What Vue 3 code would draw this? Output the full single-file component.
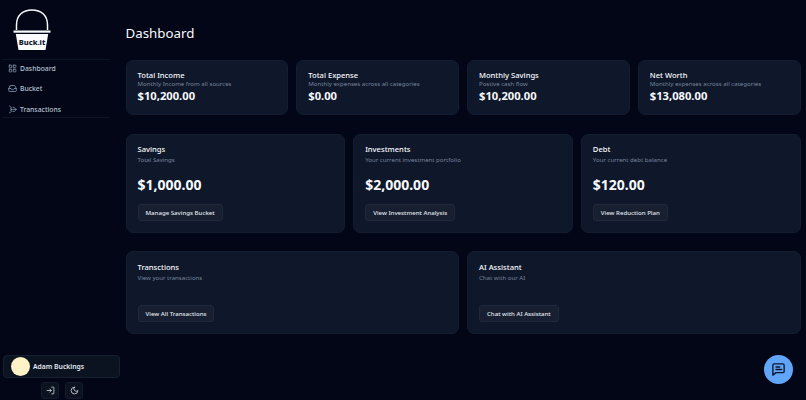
<script setup>
const stats = [
  { t: 'Total Income', s: 'Monthly Income from all sources', v: '$10,200.00' },
  { t: 'Total Expense', s: 'Monthly expenses across all categories', v: '$0.00' },
  { t: 'Monthly Savings', s: 'Postive cash flow', v: '$10,200.00' },
  { t: 'Net Worth', s: 'Monthly expenses across all categories', v: '$13,080.00' },
]
const mids = [
  { t: 'Savings', s: 'Total Savings', v: '$1,000.00', b: 'Manage Savings Bucket' },
  { t: 'Investments', s: 'Your current investment portfolio', v: '$2,000.00', b: 'View Investment Analysis' },
  { t: 'Debt', s: 'Your current debt balance', v: '$120.00', b: 'View Reduction Plan' },
]
const lows = [
  { t: 'Transctions', s: 'View your transactions', b: 'View All Transactions' },
  { t: 'AI Assistant', s: 'Chat with our AI', b: 'Chat with AI Assistant' },
]
</script>

<template>
  <div class="app">
    <aside class="side">
      <div class="logo">
        <svg width="38" height="42" viewBox="0 0 38 42">
          <path d="M3.500 21 V16 C3.500 6 10 1 19 1 S34.500 6 34.500 16 V21" fill="none" stroke="#f8fafc" stroke-width="1.500" />
          <rect x="0.500" y="21.500" width="37" height="2.200" fill="#f8fafc" />
          <path d="M2.800 25 H35.200 L32.500 41 H5.500 Z" fill="#f8fafc" />
        </svg>
        <span class="logo-text">Buck.it</span>
      </div>
      <nav class="nav">
        <a class="nav-item">
          <svg class="ic" viewBox="0 0 24 24"><rect x="3" y="3" width="7" height="7" rx="1.500" /><rect x="14" y="3" width="7" height="7" rx="1.500" /><rect x="3" y="14" width="7" height="7" rx="1.500" /><rect x="14" y="14" width="7" height="7" rx="1.500" /></svg>
          Dashboard
        </a>
        <a class="nav-item">
          <svg class="ic" viewBox="0 0 24 24"><path d="M22 12h-6l-2 3h-4l-2-3H2" /><path d="M5.500 5.100 2 12v6a2 2 0 0 0 2 2h16a2 2 0 0 0 2-2v-6l-3.500-6.900A2 2 0 0 0 16.700 4H7.300a2 2 0 0 0-1.800 1.100z" /></svg>
          Bucket
        </a>
        <a class="nav-item">
          <svg class="ic" viewBox="0 0 24 24"><path d="M4 3l5 3.500L7 11l5 1-5 1 2 4.500L4 21" /><path d="M13 7h4" /><path d="M13 17h4" /><path d="M15 12h7M19 9l3 3-3 3" /></svg>
          Transactions
        </a>
      </nav>
      <div class="side-foot">
        <div class="user">
          <span class="avatar"></span>
          <span class="uname">Adam Buckings</span>
        </div>
        <div class="actions">
          <button class="icon-btn">
            <svg class="ic" viewBox="0 0 24 24"><path d="M10 8l4 4-4 4" /><path d="M3 12h11" /><path d="M15 3h4a2 2 0 0 1 2 2v14a2 2 0 0 1-2 2h-4" /></svg>
          </button>
          <button class="icon-btn">
            <svg class="ic" viewBox="0 0 24 24"><path d="M12 3a6 6 0 0 0 9 9 9 9 0 1 1-9-9z" /></svg>
          </button>
        </div>
      </div>
    </aside>

    <main class="main">
      <h1 class="title">Dashboard</h1>
      <section class="row row4">
        <div v-for="c in stats" :key="c.t" class="card stat">
          <div class="ct">{{ c.t }}</div>
          <div class="cs">{{ c.s }}</div>
          <div class="sv">{{ c.v }}</div>
        </div>
      </section>
      <section class="row row3">
        <div v-for="c in mids" :key="c.t" class="card mid">
          <div class="ct">{{ c.t }}</div>
          <div class="cs gap">{{ c.s }}</div>
          <div class="mv">{{ c.v }}</div>
          <button class="btn">{{ c.b }}</button>
        </div>
      </section>
      <section class="row row2">
        <div v-for="c in lows" :key="c.t" class="card low">
          <div class="ct">{{ c.t }}</div>
          <div class="cs gap">{{ c.s }}</div>
          <button class="btn">{{ c.b }}</button>
        </div>
      </section>
    </main>

    <button class="fab" aria-label="Chat">
      <svg width="15" height="15" viewBox="0 0 24 24" fill="none" stroke="#0f172a" stroke-width="2.200" stroke-linecap="round" stroke-linejoin="round"><path d="M21 15a2 2 0 0 1-2 2H8l-5 4V5a2 2 0 0 1 2-2h14a2 2 0 0 1 2 2z" /><path d="M8 8h6M8 12h9" /></svg>
    </button>
  </div>
</template>

<style>
html, body { margin: 0; background: #020617; }
</style>

<style scoped>
.app {
  position: relative;
  display: flex;
  width: 806px;
  height: 400px;
  overflow: hidden;
  background: #020617;
  color: #f8fafc;
  font-family: "Noto Sans", "Open Sans", sans-serif;
}
.side {
  display: flex;
  flex-direction: column;
  width: 120px;
  flex: none;
}
.logo {
  position: relative;
  width: 38px;
  margin-left: 13px;
  padding-top: 9px;
  height: 51px;
  box-sizing: border-box;
}
.logo svg { display: block; }
.logo-text {
  position: absolute;
  left: 0;
  right: 0;
  top: 37px;
  text-align: center;
  font-size: 7.500px;
  font-weight: 800;
  line-height: 11px;
  color: #0f172a;
}
.nav {
  display: flex;
  flex-direction: column;
  margin: 8px 10px 0 2px;
  height: 59px;
  box-sizing: border-box;
  border-top: 1px solid #0b1220;
  border-bottom: 1px solid #0b1220;
}
.nav-item {
  display: flex;
  align-items: center;
  flex: none;
  gap: 3px;
  height: 20.500px;
  padding-left: 6px;
  font-size: 6.800px;
  font-weight: 500;
  color: #b6c2d2;
}
.nav-item:first-child { margin-top: -2px; }
.ic {
  width: 9px;
  height: 9px;
  fill: none;
  stroke: #94a3b8;
  stroke-width: 2;
  stroke-linecap: round;
  stroke-linejoin: round;
  flex: none;
}
.side-foot {
  margin-top: auto;
  padding: 0 0 1px 3px;
}
.user {
  display: flex;
  align-items: center;
  gap: 3px;
  width: 117px;
  height: 23px;
  box-sizing: border-box;
  padding-left: 7px;
  background: #0b1220;
  border: 1px solid #172033;
  border-radius: 4px;
  font-size: 6.800px;
  font-weight: 600;
}
.avatar {
  width: 19px;
  height: 19px;
  border-radius: 50%;
  background: #fef3c7;
}
.uname { color: #e2e8f0; }
.actions {
  display: flex;
  gap: 6px;
  margin-top: 4px;
  padding-left: 38px;
}
.icon-btn {
  display: flex;
  align-items: center;
  justify-content: center;
  width: 18px;
  height: 17px;
  padding: 0;
  background: #0b1220;
  border: 1px solid #131b2c;
  border-radius: 3px;
}
.icon-btn .ic { stroke: #e2e8f0; }
.main {
  flex: 1;
  min-width: 0;
  padding: 0 5.500px;
  display: flex;
  flex-direction: column;
}
.title {
  margin: 0;
  padding-top: 23px;
  height: 59.500px;
  flex: none;
  box-sizing: border-box;
  font-size: 13.300px;
  line-height: 20px;
  font-weight: 400;
  white-space: nowrap;
}
.row { display: grid; gap: 8px; }
.row4 { grid-template-columns: repeat(4, 1fr); }
.row3 { grid-template-columns: repeat(3, 1fr); margin-top: 19px; }
.row2 { grid-template-columns: repeat(2, 1fr); margin-top: 18.500px; }
.card {
  background: #0f172a;
  border: 1px solid #141d30;
  border-radius: 7px;
  box-sizing: border-box;
  padding: 9.500px 11px;
  min-width: 0;
}
.stat { height: 55px; }
.mid { height: 99px; }
.low { height: 83px; padding-top: 10px; }
.ct {
  font-size: 7.600px;
  line-height: 10px;
  font-weight: 500;
  color: #f8fafc;
  white-space: nowrap;
}
.cs {
  font-size: 6.100px;
  line-height: 8px;
  color: #76859b;
  white-space: nowrap;
}
.sv {
  margin-top: 1px;
  font-size: 11.200px;
  line-height: 14px;
  font-weight: 700;
}
.cs.gap { margin-top: 2px; }
.mv {
  margin-top: 11px;
  font-size: 14px;
  line-height: 20px;
  font-weight: 700;
}
.mid .btn { margin-top: 9px; }
.low .btn { margin-top: 23px; }
.btn {
  display: block;
  height: 17px;
  padding: 0 7px;
  background: #171f30;
  border: 1px solid #1f293b;
  border-radius: 3px;
  color: #e2e8f0;
  font-family: inherit;
  font-size: 6.100px;
  font-weight: 500;
  white-space: nowrap;
}
.fab {
  position: absolute;
  left: 764px;
  top: 355px;
  display: flex;
  align-items: center;
  justify-content: center;
  width: 29px;
  height: 29px;
  padding: 0;
  border: 0;
  border-radius: 50%;
  background: #60a5fa;
}
</style>
